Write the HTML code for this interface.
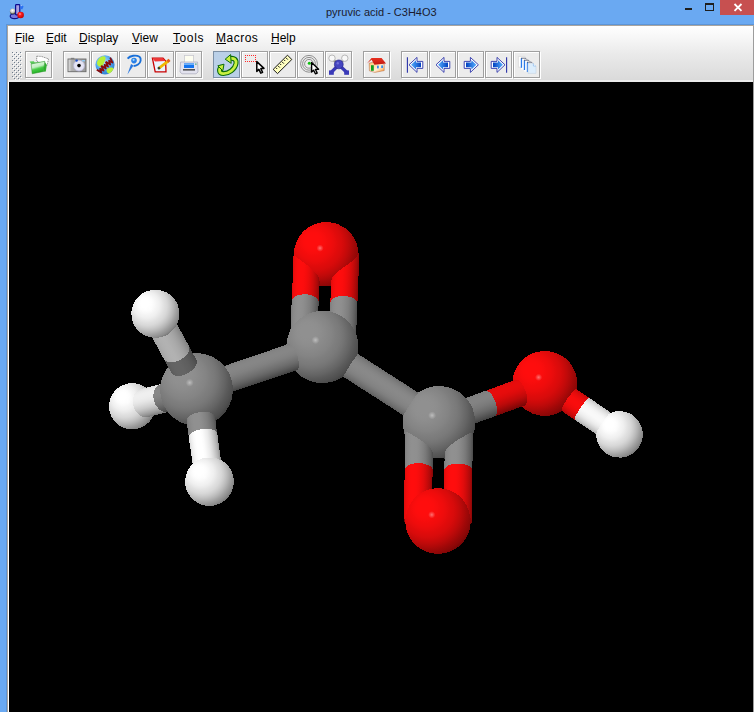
<!DOCTYPE html>
<html><head><meta charset="utf-8">
<style>
html,body{margin:0;padding:0;width:754px;height:712px;overflow:hidden;background:#6aa9f2;font-family:"Liberation Sans",sans-serif;}
.abs{position:absolute;}
#frame{position:absolute;left:0;top:0;width:754px;height:712px;background:#6aa9f2;}
#title{position:absolute;left:326px;top:6px;font-size:11px;color:#1b1b2e;white-space:nowrap;}
#client{position:absolute;left:6px;top:24px;width:748px;height:688px;background:#5c95d8;}
#inner{position:absolute;left:7px;top:25px;width:747px;height:687px;background:#aaa59f;}
#bars{position:absolute;left:8px;top:26px;width:745px;height:56px;background:linear-gradient(#ffffff 0px,#f5f5f5 14px,#eaeaea 28px,#dadada 54px,#ebebeb 54px,#ececec 56px);}
#rightline{position:absolute;left:753px;top:26px;width:1px;height:686px;background:#9c9c9c;}
#leftwhite{position:absolute;left:8px;top:82px;width:1px;height:630px;background:#ffffff;}
#view{position:absolute;left:9px;top:82px;width:744px;height:630px;background:#000;}
.menu{position:absolute;top:31px;font-size:12px;color:#000;white-space:nowrap;}
.ul{position:absolute;top:43px;height:1px;background:#000;}
.btn{position:absolute;top:51px;width:25px;height:25px;border:1px solid #a0a0a0;box-shadow:inset 1px 1px 0 #fff,1px 1px 0 #fff;background:#ececec;}
.btn.sel{background:#bad0e8;border-color:#7d90a5;box-shadow:1px 1px 0 #fff;}
.btn svg{position:absolute;left:-1px;top:-1px;}
</style></head><body>
<div id="frame"></div>
<!-- title bar -->
<svg class="abs" style="left:9px;top:3px" width="17" height="18" viewBox="0 0 17 18">
  <defs><radialGradient id="tgb" cx="0.45" cy="0.35" r="0.6"><stop offset="0" stop-color="#ffffff"/><stop offset="0.6" stop-color="#c8c8c0"/><stop offset="1" stop-color="#404040"/></radialGradient>
  <radialGradient id="trb" cx="0.4" cy="0.35" r="0.65"><stop offset="0" stop-color="#ffb0b0"/><stop offset="0.35" stop-color="#ff2020"/><stop offset="1" stop-color="#c00000"/></radialGradient></defs>
  <ellipse cx="5.5" cy="13.2" rx="4.3" ry="2.4" fill="#7a7ae0" stroke="#10108a" stroke-width="1.1"/>
  <circle cx="3.8" cy="8.4" r="2.9" fill="url(#tgb)"/>
  <rect x="6.6" y="1.6" width="4.2" height="10.2" rx="0.8" fill="#a8a0e0" stroke="#0c0c90" stroke-width="1.2"/>
  <path d="M11.2 1.2 L14.6 3.6 L13.2 6.6 L11.2 5.6 Z" fill="#2a70f0"/>
  <path d="M11.6 1.6 L12.8 2.4 L12 3.4 Z" fill="#ffffff" opacity="0.9"/>
  <circle cx="11.6" cy="12" r="3.3" fill="url(#trb)"/>
</svg>
<div id="title">pyruvic acid - C3H4O3</div>
<div class="abs" style="left:685px;top:8px;width:7px;height:2px;background:#1e1e1e"></div>
<div class="abs" style="left:705px;top:3px;width:7px;height:5px;border:1px solid #1e1e1e;border-top-width:2px"></div>
<div class="abs" style="left:720px;top:0px;width:34px;height:15px;background:#c75050"></div>
<svg class="abs" style="left:733px;top:3px" width="10" height="9" viewBox="0 0 10 9">
  <path d="M1.5 1 L8.5 7.8 M8.5 1 L1.5 7.8" stroke="#fff" stroke-width="1.8"/>
</svg>
<div id="client"></div>
<div id="inner"></div>
<div id="bars"></div>
<div id="rightline"></div>
<div id="leftwhite"></div>
<!-- menus -->
<div class="menu" style="left:15px">File</div>
<div class="menu" style="left:46px">Edit</div>
<div class="menu" style="left:79px">Display</div>
<div class="menu" style="left:132px">View</div>
<div class="menu" style="left:173px;letter-spacing:0.6px">Tools</div>
<div class="menu" style="left:216px;letter-spacing:0.5px">Macros</div>
<div class="menu" style="left:271px">Help</div>
<div class="ul" style="left:15px;width:6px"></div>
<div class="ul" style="left:46px;width:7px"></div>
<div class="ul" style="left:79px;width:8px"></div>
<div class="ul" style="left:132px;width:7px"></div>
<div class="ul" style="left:173px;width:7px"></div>
<div class="ul" style="left:216px;width:10px"></div>
<div class="ul" style="left:271px;width:8px"></div>
<!-- grip -->
<svg class="abs" style="left:11px;top:51px" width="12" height="29" viewBox="0 0 12 29" shape-rendering="crispEdges"><g fill="#ffffff"><rect x="2" y="2" width="1" height="1"/><rect x="6" y="2" width="1" height="1"/><rect x="10" y="2" width="1" height="1"/><rect x="4" y="4" width="1" height="1"/><rect x="8" y="4" width="1" height="1"/><rect x="2" y="6" width="1" height="1"/><rect x="6" y="6" width="1" height="1"/><rect x="10" y="6" width="1" height="1"/><rect x="4" y="8" width="1" height="1"/><rect x="8" y="8" width="1" height="1"/><rect x="2" y="10" width="1" height="1"/><rect x="6" y="10" width="1" height="1"/><rect x="10" y="10" width="1" height="1"/><rect x="4" y="12" width="1" height="1"/><rect x="8" y="12" width="1" height="1"/><rect x="2" y="14" width="1" height="1"/><rect x="6" y="14" width="1" height="1"/><rect x="10" y="14" width="1" height="1"/><rect x="4" y="16" width="1" height="1"/><rect x="8" y="16" width="1" height="1"/><rect x="2" y="18" width="1" height="1"/><rect x="6" y="18" width="1" height="1"/><rect x="10" y="18" width="1" height="1"/><rect x="4" y="20" width="1" height="1"/><rect x="8" y="20" width="1" height="1"/><rect x="2" y="22" width="1" height="1"/><rect x="6" y="22" width="1" height="1"/><rect x="10" y="22" width="1" height="1"/><rect x="4" y="24" width="1" height="1"/><rect x="8" y="24" width="1" height="1"/><rect x="2" y="26" width="1" height="1"/><rect x="6" y="26" width="1" height="1"/><rect x="10" y="26" width="1" height="1"/><rect x="4" y="28" width="1" height="1"/><rect x="8" y="28" width="1" height="1"/></g><g fill="#6f7c8c"><rect x="1" y="1" width="1" height="1"/><rect x="5" y="1" width="1" height="1"/><rect x="9" y="1" width="1" height="1"/><rect x="3" y="3" width="1" height="1"/><rect x="7" y="3" width="1" height="1"/><rect x="1" y="5" width="1" height="1"/><rect x="5" y="5" width="1" height="1"/><rect x="9" y="5" width="1" height="1"/><rect x="3" y="7" width="1" height="1"/><rect x="7" y="7" width="1" height="1"/><rect x="1" y="9" width="1" height="1"/><rect x="5" y="9" width="1" height="1"/><rect x="9" y="9" width="1" height="1"/><rect x="3" y="11" width="1" height="1"/><rect x="7" y="11" width="1" height="1"/><rect x="1" y="13" width="1" height="1"/><rect x="5" y="13" width="1" height="1"/><rect x="9" y="13" width="1" height="1"/><rect x="3" y="15" width="1" height="1"/><rect x="7" y="15" width="1" height="1"/><rect x="1" y="17" width="1" height="1"/><rect x="5" y="17" width="1" height="1"/><rect x="9" y="17" width="1" height="1"/><rect x="3" y="19" width="1" height="1"/><rect x="7" y="19" width="1" height="1"/><rect x="1" y="21" width="1" height="1"/><rect x="5" y="21" width="1" height="1"/><rect x="9" y="21" width="1" height="1"/><rect x="3" y="23" width="1" height="1"/><rect x="7" y="23" width="1" height="1"/><rect x="1" y="25" width="1" height="1"/><rect x="5" y="25" width="1" height="1"/><rect x="9" y="25" width="1" height="1"/><rect x="3" y="27" width="1" height="1"/><rect x="7" y="27" width="1" height="1"/></g></svg>
<!-- buttons -->
<div class="btn" style="left:25px"></div>
<div class="btn" style="left:63px"></div>
<div class="btn" style="left:91px"></div>
<div class="btn" style="left:119px"></div>
<div class="btn" style="left:147px"></div>
<div class="btn" style="left:175px"></div>
<div class="btn sel" style="left:213px"></div>
<div class="btn" style="left:241px"></div>
<div class="btn" style="left:269px"></div>
<div class="btn" style="left:297px"></div>
<div class="btn" style="left:325px"></div>
<div class="btn" style="left:363px"></div>
<div class="btn" style="left:401px"></div>
<div class="btn" style="left:429px"></div>
<div class="btn" style="left:457px"></div>
<div class="btn" style="left:485px"></div>
<div class="btn" style="left:513px"></div>
<svg class="abs" style="left:0;top:51px" width="560" height="28" viewBox="0 51 560 28">
<defs>
 <linearGradient id="ifold" x1="0.2" y1="0" x2="0.5" y2="1"><stop offset="0" stop-color="#f0fcf0"/><stop offset="0.45" stop-color="#c0eec0"/><stop offset="0.62" stop-color="#48cc48"/><stop offset="1" stop-color="#18a818"/></linearGradient>
 <linearGradient id="icam" x1="0" y1="0" x2="1" y2="0"><stop offset="0" stop-color="#e8e8e8"/><stop offset="0.2" stop-color="#b0b0b0"/><stop offset="1" stop-color="#9a9a9a"/></linearGradient>
 <radialGradient id="iglobe" cx="0.4" cy="0.35" r="0.7"><stop offset="0" stop-color="#b8e0ff"/><stop offset="0.6" stop-color="#4aa4ec"/><stop offset="1" stop-color="#2a78d0"/></radialGradient>
 <linearGradient id="iarrR" x1="0" y1="0" x2="1" y2="0"><stop offset="0" stop-color="#0040c0"/><stop offset="1" stop-color="#58b0ff"/></linearGradient>
 <linearGradient id="iarrL" x1="1" y1="0" x2="0" y2="0"><stop offset="0" stop-color="#0040c0"/><stop offset="1" stop-color="#58b0ff"/></linearGradient>
 <linearGradient id="iroof" x1="0" y1="0" x2="0" y2="1"><stop offset="0" stop-color="#e83020"/><stop offset="1" stop-color="#c01810"/></linearGradient>
 <linearGradient id="iwall" x1="0" y1="0" x2="1" y2="1"><stop offset="0" stop-color="#ffc070"/><stop offset="0.6" stop-color="#fff0d8"/><stop offset="1" stop-color="#ff9020"/></linearGradient>
</defs>
<!-- folder @25 -->
<g transform="translate(25,51)">
 <path d="M11.8 5.2 L16.5 5.4 L23.6 7.9 L22 14.5 L11.6 10 Z" fill="#ffffff" stroke="#606060" stroke-width="0.7" stroke-dasharray="1.1 0.7"/>
 <path d="M19.6 10.6 L21.8 14 L20.8 20.6 L18.6 20.8 Z" fill="#30b030"/>
 <path d="M4.6 10.4 L8.8 10.2 L9.8 11.6 L19.6 10.4 L19.2 12 L6.4 13.2 Z" fill="#58c858"/>
 <path d="M6.2 13 L19.8 10.3 L18.6 20.4 L7.2 22.8 Z" fill="url(#ifold)" stroke="#289028" stroke-width="0.5"/>
</g>
<!-- camera @63 -->
<g transform="translate(63,51)">
 <rect x="7.8" y="6.8" width="3.5" height="1.5" fill="#909090"/>
 <rect x="5" y="8" width="18" height="12.7" fill="url(#icam)" stroke="#6a6a6a" stroke-width="0.9"/>
 <circle cx="16" cy="14.6" r="5.4" fill="#e4e4f4" stroke="#b8b8d8" stroke-width="0.8"/>
 <circle cx="16" cy="14.6" r="1.8" fill="#000"/>
 <circle cx="13.6" cy="9.6" r="1.2" fill="#2050c8"/>
 <rect x="19" y="9" width="3" height="1.4" fill="#90c8f0"/>
</g>
<!-- www @91 -->
<g transform="translate(91,51)">
 <circle cx="14" cy="13.8" r="9.6" fill="url(#iglobe)"/>
 <path d="M7 9 C9 5, 13 4.5, 14.5 6 C15 9, 13 11, 12 14 C11 17, 8 16, 6.5 14 C5.5 12, 6 10.5, 7 9 Z" fill="#b8f038"/>
 <path d="M16 18 C18 16, 22 16, 22.6 17.5 C21.5 20.5, 19 22.5, 17 22.6 C15.5 21, 15 19, 16 18 Z" fill="#b8f038"/>
 <path transform="translate(14.2,14.6) rotate(-42)" d="M-9.0 -2.6 L-7.5 2.6 L-6.0 -1 L-4.5 2.6 L-3.0 -2.6 M-3.0 -2.6 L-1.5 2.6 L0.0 -1 L1.5 2.6 L3.0 -2.6 M3.0 -2.6 L4.5 2.6 L6.0 -1 L7.5 2.6 L9.0 -2.6" fill="none" stroke="#8a0c0c" stroke-width="1.7" stroke-linejoin="round"/>
</g>
<!-- pin @119 -->
<g transform="translate(119,51)">
 <path d="M8.6 7.6 C11 4.6, 17 3.6, 20.5 5.8 C22.5 7.5, 22 11.5, 19 13.5 C17.5 14.5, 16 15, 14.6 15" fill="none" stroke="#1a70d8" stroke-width="1.9"/>
 <path d="M12 13 L14.5 14.5 L8.4 23.6 Z" fill="#2a78e0"/>
 <circle cx="15" cy="9.6" r="2.8" fill="#2a80e8"/>
 <circle cx="14.6" cy="8.8" r="1.1" fill="#9ad8ff"/>
</g>
<!-- edit @147 -->
<g transform="translate(147,51)">
 <path d="M5.4 7.2 L16 7.2 L18.6 10 L19 20.8 L8.2 20.8 Z" fill="#e8f4ff" stroke="#c80000" stroke-width="1.3"/>
 <path d="M5.4 7.2 L16 7.2 L18.4 10 L8 10.6 Z" fill="#f03838"/>
 <path d="M11.5 17.5 L21.8 9.6" stroke="#f0b800" stroke-width="2.8"/>
 <path d="M20.4 10.6 L22.6 8.8" stroke="#e06020" stroke-width="2.8"/>
 <path d="M11 17.9 L12.8 16.5" stroke="#304030" stroke-width="2.4"/>
</g>
<!-- print @175 -->
<g transform="translate(175,51)">
 <rect x="9.4" y="4.4" width="9.2" height="8.6" fill="#fdfdf0" stroke="#c8c8d0" stroke-width="0.8"/>
 <path d="M5.6 11 L22.6 11 L23 21 L21 22.8 L7 22.8 L5 21 Z" fill="#e2e2ee" stroke="#b0b0c0" stroke-width="0.8"/>
 <rect x="9" y="12.2" width="10" height="4.8" fill="#1474f0"/>
 <rect x="9" y="12.2" width="10" height="1.8" fill="#70b0f8"/>
 <rect x="8" y="18.2" width="12" height="1.3" fill="#303030"/>
 <rect x="20" y="12.6" width="1.6" height="1" fill="#30a060"/>
</g>
<!-- rotate @213 -->
<g transform="translate(213,51)">
 <path d="M9.2 15.6 C5.5 17.5, 5.4 22.6, 10.5 22.6 C15.5 22.6, 22 18.4, 23 12.6 C23.6 8.6, 21 6.8, 17.4 7.4" fill="none" stroke="#0a6a0a" stroke-width="5"/>
 <path d="M9.2 15.6 C5.5 17.5, 5.4 22.6, 10.5 22.6 C15.5 22.6, 22 18.4, 23 12.6 C23.6 8.6, 21 6.8, 17.4 7.4" fill="none" stroke="#c8f040" stroke-width="2.8"/>
 <path d="M12.2 8.2 L17.6 3.6 L18.2 12.4 Z" fill="#c8f040" stroke="#0a6a0a" stroke-width="1"/>
 <path d="M4.8 14.8 L11 13.2 L9.8 19.8 Z" fill="#c8f040" stroke="#0a6a0a" stroke-width="1"/>
</g>
<!-- select @241 -->
<g transform="translate(241,51)">
 <g fill="#ff2a2a" shape-rendering="crispEdges"><rect x="4" y="4" width="1" height="1"/><rect x="4" y="10" width="1" height="1"/><rect x="6" y="4" width="1" height="1"/><rect x="6" y="10" width="1" height="1"/><rect x="8" y="4" width="1" height="1"/><rect x="8" y="10" width="1" height="1"/><rect x="10" y="4" width="1" height="1"/><rect x="10" y="10" width="1" height="1"/><rect x="12" y="4" width="1" height="1"/><rect x="12" y="10" width="1" height="1"/><rect x="14" y="4" width="1" height="1"/><rect x="14" y="10" width="1" height="1"/><rect x="4" y="6" width="1" height="1"/><rect x="14" y="6" width="1" height="1"/><rect x="4" y="8" width="1" height="1"/><rect x="14" y="8" width="1" height="1"/></g>
 <path d="M15.8 10.6 L15.8 20.4 L17.9 18.4 L19.8 22.2 L21.6 21.3 L19.8 17.6 L23 17.4 Z" fill="#fff" stroke="#000" stroke-width="1.5" stroke-linejoin="round"/>
</g>
<!-- ruler @269 -->
<g transform="translate(269,51)">
 <path d="M4.2 18.4 L18.5 4.2 L22.8 8.5 L8.5 22.6 Z" fill="#ffffc0" stroke="#000" stroke-width="0.9"/>
 <path d="M7 16.8 L8.2 18 M9 14.8 L10.8 16.6 M11 12.8 L12.2 14 M13 10.8 L14.8 12.6 M15 8.8 L16.2 10 M17 6.8 L18.8 8.6" stroke="#000" stroke-width="0.9"/>
</g>
<!-- rotpick @297 -->
<g transform="translate(297,51)">
 <circle cx="12" cy="12.8" r="8.4" fill="none" stroke="#858585" stroke-width="0.9"/>
 <circle cx="12" cy="12.8" r="6.4" fill="none" stroke="#858585" stroke-width="0.9"/>
 <circle cx="12" cy="12.8" r="4.4" fill="none" stroke="#858585" stroke-width="0.9"/>
 <circle cx="12.3" cy="12.2" r="1.5" fill="#10c010"/>
 <path d="M14.6 11.4 L14.6 21 L16.6 19.2 L18.4 22.8 L20.2 22 L18.4 18.4 L21.6 18.2 Z" fill="#fff" stroke="#000" stroke-width="1.4" stroke-linejoin="round"/>
</g>
<!-- atom @325 -->
<g transform="translate(325,51)">
 <path d="M8.6 9 L13 13 M18.6 9 L14.6 13" stroke="#8a8a8a" stroke-width="2.4"/>
 <circle cx="7" cy="7.2" r="3.2" fill="#f8f8f8" stroke="#a8a8a8" stroke-width="0.8"/>
 <circle cx="19.8" cy="7.2" r="3.2" fill="#f8f8f8" stroke="#a8a8a8" stroke-width="0.8"/>
 <path d="M6.6 21 L13.8 13.8 L21.4 21" fill="none" stroke="#3a3ab4" stroke-width="3.2"/>
 <rect x="4" y="19.4" width="4.8" height="4.4" fill="#3a3ab8"/>
 <rect x="19.2" y="19.4" width="4.8" height="4.4" fill="#3a3ab8"/>
 <circle cx="13.8" cy="13.4" r="4.4" fill="#4646c0" stroke="#28288c" stroke-width="0.7"/>
 <circle cx="12.8" cy="12.2" r="1.2" fill="#7070d8"/>
</g>
<!-- home @363 -->
<g transform="translate(363,51)">
 <path d="M6.2 12.2 L10.2 11.2 L21.2 13 L21.2 19.6 L11.8 21.4 L6.4 19.8 Z" fill="url(#iwall)" stroke="#a04010" stroke-width="0.4"/>
 <path d="M4 12.4 L8.5 7 L18.6 7 L23 12.6 L11.4 13.8 L8.6 8.8 Z" fill="url(#iroof)"/>
 <rect x="8" y="14.2" width="2.8" height="5.6" fill="#10a020"/>
 <rect x="14" y="14.6" width="1.8" height="2.8" fill="#3a8ee8"/>
 <rect x="18.2" y="14.4" width="1.8" height="2.6" fill="#3a8ee8"/>
</g>
<!-- first @401 -->
<g transform="translate(401,51)">
 <path d="M6.4 6.2 V21.8" stroke="#2a32a8" stroke-width="1.1"/>
 <path d="M8 13.8 L16 6.4 L16 10.4 L21.8 10.4 L21.8 17.4 L16 17.4 L16 21.4 Z" fill="#fff" stroke="#2a32a8" stroke-width="0.9" stroke-linejoin="round"/>
 <path d="M10 13.8 L15 9.2 L15 11.6 L20 11.6 L20 16.2 L15 16.2 L15 18.6 Z" fill="url(#iarrL)"/>
</g>
<!-- prev @429 -->
<g transform="translate(429,51)">
 <path d="M7 13.8 L15 6.4 L15 10.4 L20.8 10.4 L20.8 17.4 L15 17.4 L15 21.4 Z" fill="#fff" stroke="#2a32a8" stroke-width="0.9" stroke-linejoin="round"/>
 <path d="M9 13.8 L14 9.2 L14 11.6 L19 11.6 L19 16.2 L14 16.2 L14 18.6 Z" fill="url(#iarrL)"/>
</g>
<!-- next @457 -->
<g transform="translate(457,51)">
 <path d="M21.4 13.8 L13.4 6.4 L13.4 10.4 L7.2 10.4 L7.2 17.4 L13.4 17.4 L13.4 21.4 Z" fill="#fff" stroke="#2a32a8" stroke-width="0.9" stroke-linejoin="round"/>
 <path d="M19.4 13.8 L14.4 9.2 L14.4 11.6 L9 11.6 L9 16.2 L14.4 16.2 L14.4 18.6 Z" fill="url(#iarrR)"/>
</g>
<!-- last @485 -->
<g transform="translate(485,51)">
 <path d="M21.6 6.2 V21.8" stroke="#2a32a8" stroke-width="1.1"/>
 <path d="M20 13.8 L12 6.4 L12 10.4 L6.2 10.4 L6.2 17.4 L12 17.4 L12 21.4 Z" fill="#fff" stroke="#2a32a8" stroke-width="0.9" stroke-linejoin="round"/>
 <path d="M18 13.8 L13 9.2 L13 11.6 L8 11.6 L8 16.2 L13 16.2 L13 18.6 Z" fill="url(#iarrR)"/>
</g>
<!-- copies @513 -->
<g transform="translate(513,51)">
 <path d="M5.4 5.4 H11.6 L12.6 6.4 V16.2 H5.4 Z" fill="#fff" stroke="#d0d0d0" stroke-width="0.6"/>
 <path d="M8.2 7.4 H12.4 L13.8 8.6 V18.4 H8.2 Z" fill="#fff"/>
 <rect x="7.8" y="7.2" width="1.3" height="9.6" fill="#2a7ae8"/>
 <path d="M8 7.2 H12.4 L13.6 8.4" fill="none" stroke="#303850" stroke-width="0.7"/>
 <path d="M11.2 9.4 H15.4 L16.8 10.6 V20.4 H11.2 Z" fill="#fff"/>
 <rect x="10.8" y="9.2" width="1.3" height="9.8" fill="#2a7ae8"/>
 <path d="M11 9.2 H15.4 L16.6 10.4" fill="none" stroke="#303850" stroke-width="0.7"/>
 <path d="M14.2 11.4 H18.4 L19.8 12.6 V21 H14.2 Z" fill="#fff"/>
 <rect x="13.8" y="11.2" width="1.3" height="9.8" fill="#2a7ae8"/>
 <path d="M14 11.2 H18.4 L19.6 12.4" fill="none" stroke="#303850" stroke-width="0.7"/>
 <path d="M15 12.4 H20.4 L23 15 V22.4 H15 Z" fill="#dcedfc" stroke="#c8d4e0" stroke-width="0.6"/>
 <path d="M20.4 12.4 V15 H23" fill="#ffffff" stroke="#7ab0e8" stroke-width="0.6"/>
</g>
</svg>

<div id="view"></div>
<svg style="position:absolute;left:9px;top:82px" width="744" height="630" viewBox="9 82 744 630" shape-rendering="crispEdges"><defs><radialGradient id="spec"><stop offset="0" stop-color="#fff" stop-opacity="0.42"/><stop offset="0.5" stop-color="#fff" stop-opacity="0.2"/><stop offset="1" stop-color="#fff" stop-opacity="0"/></radialGradient><radialGradient id="g0" gradientUnits="userSpaceOnUse" cx="326.2" cy="254.3" r="90.44" fx="311.34" fy="239.44"><stop offset="0" stop-color="#ff0d0d"/><stop offset="0.03" stop-color="#ff0d0d"/><stop offset="0.06" stop-color="#ff0d0d"/><stop offset="0.1" stop-color="#fd0d0d"/><stop offset="0.13" stop-color="#f90d0d"/><stop offset="0.16" stop-color="#f40c0c"/><stop offset="0.19" stop-color="#f00c0c"/><stop offset="0.22" stop-color="#e90c0c"/><stop offset="0.25" stop-color="#e10b0b"/><stop offset="0.29" stop-color="#d80b0b"/><stop offset="0.32" stop-color="#cd0a0a"/><stop offset="0.35" stop-color="#c00a0a"/><stop offset="0.38" stop-color="#b10909"/><stop offset="0.41" stop-color="#a00808"/><stop offset="0.45" stop-color="#8c0707"/><stop offset="0.48" stop-color="#740606"/></radialGradient><radialGradient id="g8" gradientUnits="userSpaceOnUse" cx="544.8" cy="383.5" r="91" fx="529.85" fy="368.55"><stop offset="0" stop-color="#ff0d0d"/><stop offset="0.03" stop-color="#ff0d0d"/><stop offset="0.06" stop-color="#ff0d0d"/><stop offset="0.1" stop-color="#fd0d0d"/><stop offset="0.13" stop-color="#f90d0d"/><stop offset="0.16" stop-color="#f40c0c"/><stop offset="0.19" stop-color="#f00c0c"/><stop offset="0.22" stop-color="#e90c0c"/><stop offset="0.25" stop-color="#e10b0b"/><stop offset="0.29" stop-color="#d80b0b"/><stop offset="0.32" stop-color="#cd0a0a"/><stop offset="0.35" stop-color="#c00a0a"/><stop offset="0.38" stop-color="#b10909"/><stop offset="0.41" stop-color="#a00808"/><stop offset="0.45" stop-color="#8c0707"/><stop offset="0.48" stop-color="#740606"/></radialGradient><linearGradient id="g38" gradientUnits="userSpaceOnUse" x1="552.23" y1="372.59" x2="537.37" y2="394.41"><stop offset="0" stop-color="#c00a0a"/><stop offset="0.08" stop-color="#d80b0b"/><stop offset="0.17" stop-color="#e70c0c"/><stop offset="0.25" stop-color="#f10c0c"/><stop offset="0.33" stop-color="#f70d0d"/><stop offset="0.42" stop-color="#f90d0d"/><stop offset="0.5" stop-color="#f90d0d"/><stop offset="0.58" stop-color="#f50d0d"/><stop offset="0.67" stop-color="#ef0c0c"/><stop offset="0.75" stop-color="#e60c0c"/><stop offset="0.83" stop-color="#d80b0b"/><stop offset="0.92" stop-color="#c60a0a"/><stop offset="1" stop-color="#a90909"/></linearGradient><linearGradient id="g20" gradientUnits="userSpaceOnUse" x1="291.65" y1="301.17" x2="318.83" y2="302.28"><stop offset="0" stop-color="#e00b0b"/><stop offset="0.08" stop-color="#f20c0c"/><stop offset="0.17" stop-color="#fb0d0d"/><stop offset="0.25" stop-color="#fe0d0d"/><stop offset="0.33" stop-color="#fe0d0d"/><stop offset="0.42" stop-color="#fb0d0d"/><stop offset="0.5" stop-color="#f50c0c"/><stop offset="0.58" stop-color="#ec0c0c"/><stop offset="0.67" stop-color="#e00b0b"/><stop offset="0.75" stop-color="#d10b0b"/><stop offset="0.83" stop-color="#bf0a0a"/><stop offset="0.92" stop-color="#a70909"/><stop offset="1" stop-color="#860707"/></linearGradient><linearGradient id="g24" gradientUnits="userSpaceOnUse" x1="330.22" y1="302.75" x2="357.4" y2="303.86"><stop offset="0" stop-color="#e00b0b"/><stop offset="0.08" stop-color="#f20c0c"/><stop offset="0.17" stop-color="#fb0d0d"/><stop offset="0.25" stop-color="#fe0d0d"/><stop offset="0.33" stop-color="#fe0d0d"/><stop offset="0.42" stop-color="#fb0d0d"/><stop offset="0.5" stop-color="#f50c0c"/><stop offset="0.58" stop-color="#ec0c0c"/><stop offset="0.67" stop-color="#e00b0b"/><stop offset="0.75" stop-color="#d10b0b"/><stop offset="0.83" stop-color="#bf0a0a"/><stop offset="0.92" stop-color="#a70909"/><stop offset="1" stop-color="#860707"/></linearGradient><linearGradient id="g40" gradientUnits="userSpaceOnUse" x1="589.58" y1="398.04" x2="574.72" y2="419.86"><stop offset="0" stop-color="#c0c0c0"/><stop offset="0.08" stop-color="#d8d8d8"/><stop offset="0.17" stop-color="#e7e7e7"/><stop offset="0.25" stop-color="#f1f1f1"/><stop offset="0.33" stop-color="#f7f7f7"/><stop offset="0.42" stop-color="#f9f9f9"/><stop offset="0.5" stop-color="#f9f9f9"/><stop offset="0.58" stop-color="#f5f5f5"/><stop offset="0.67" stop-color="#efefef"/><stop offset="0.75" stop-color="#e6e6e6"/><stop offset="0.83" stop-color="#d8d8d8"/><stop offset="0.92" stop-color="#c6c6c6"/><stop offset="1" stop-color="#a9a9a9"/></linearGradient><linearGradient id="g36" gradientUnits="userSpaceOnUse" x1="485.07" y1="390.81" x2="494.5" y2="416.54"><stop offset="0" stop-color="#db0b0b"/><stop offset="0.08" stop-color="#e50c0c"/><stop offset="0.17" stop-color="#e80c0c"/><stop offset="0.25" stop-color="#e70c0c"/><stop offset="0.33" stop-color="#e40c0c"/><stop offset="0.42" stop-color="#de0b0b"/><stop offset="0.5" stop-color="#d50b0b"/><stop offset="0.58" stop-color="#cb0a0a"/><stop offset="0.67" stop-color="#bf0a0a"/><stop offset="0.75" stop-color="#b00909"/><stop offset="0.83" stop-color="#9e0808"/><stop offset="0.92" stop-color="#890707"/><stop offset="1" stop-color="#730606"/></linearGradient><radialGradient id="g9" gradientUnits="userSpaceOnUse" cx="619.5" cy="434.4" r="65.24" fx="608.78" fy="423.68"><stop offset="0" stop-color="#ffffff"/><stop offset="0.03" stop-color="#ffffff"/><stop offset="0.06" stop-color="#ffffff"/><stop offset="0.1" stop-color="#fdfdfd"/><stop offset="0.13" stop-color="#f9f9f9"/><stop offset="0.16" stop-color="#f4f4f4"/><stop offset="0.19" stop-color="#f0f0f0"/><stop offset="0.22" stop-color="#e9e9e9"/><stop offset="0.25" stop-color="#e1e1e1"/><stop offset="0.29" stop-color="#d8d8d8"/><stop offset="0.32" stop-color="#cdcdcd"/><stop offset="0.35" stop-color="#c0c0c0"/><stop offset="0.38" stop-color="#b1b1b1"/><stop offset="0.41" stop-color="#a0a0a0"/><stop offset="0.45" stop-color="#8c8c8c"/><stop offset="0.48" stop-color="#747474"/></radialGradient><radialGradient id="g4" gradientUnits="userSpaceOnUse" cx="132.2" cy="406.3" r="65.1" fx="121.5" fy="395.61"><stop offset="0" stop-color="#ffffff"/><stop offset="0.03" stop-color="#ffffff"/><stop offset="0.06" stop-color="#ffffff"/><stop offset="0.1" stop-color="#fdfdfd"/><stop offset="0.13" stop-color="#f9f9f9"/><stop offset="0.16" stop-color="#f4f4f4"/><stop offset="0.19" stop-color="#f0f0f0"/><stop offset="0.22" stop-color="#e9e9e9"/><stop offset="0.25" stop-color="#e1e1e1"/><stop offset="0.29" stop-color="#d8d8d8"/><stop offset="0.32" stop-color="#cdcdcd"/><stop offset="0.35" stop-color="#c0c0c0"/><stop offset="0.38" stop-color="#b1b1b1"/><stop offset="0.41" stop-color="#a0a0a0"/><stop offset="0.45" stop-color="#8c8c8c"/><stop offset="0.48" stop-color="#747474"/></radialGradient><linearGradient id="g18" gradientUnits="userSpaceOnUse" x1="289.83" y1="345.66" x2="317" y2="346.78"><stop offset="0" stop-color="#7e7e7e"/><stop offset="0.08" stop-color="#898989"/><stop offset="0.17" stop-color="#8e8e8e"/><stop offset="0.25" stop-color="#909090"/><stop offset="0.33" stop-color="#909090"/><stop offset="0.42" stop-color="#8e8e8e"/><stop offset="0.5" stop-color="#8a8a8a"/><stop offset="0.58" stop-color="#858585"/><stop offset="0.67" stop-color="#7f7f7f"/><stop offset="0.75" stop-color="#767676"/><stop offset="0.83" stop-color="#6c6c6c"/><stop offset="0.92" stop-color="#5e5e5e"/><stop offset="1" stop-color="#4c4c4c"/></linearGradient><linearGradient id="g22" gradientUnits="userSpaceOnUse" x1="328.39" y1="347.25" x2="355.57" y2="348.36"><stop offset="0" stop-color="#7e7e7e"/><stop offset="0.08" stop-color="#898989"/><stop offset="0.17" stop-color="#8e8e8e"/><stop offset="0.25" stop-color="#909090"/><stop offset="0.33" stop-color="#909090"/><stop offset="0.42" stop-color="#8e8e8e"/><stop offset="0.5" stop-color="#8a8a8a"/><stop offset="0.58" stop-color="#858585"/><stop offset="0.67" stop-color="#7f7f7f"/><stop offset="0.75" stop-color="#767676"/><stop offset="0.83" stop-color="#6c6c6c"/><stop offset="0.92" stop-color="#5e5e5e"/><stop offset="1" stop-color="#4c4c4c"/></linearGradient><linearGradient id="g34" gradientUnits="userSpaceOnUse" x1="434.28" y1="409.44" x2="443.72" y2="435.16"><stop offset="0" stop-color="#7c7c7c"/><stop offset="0.08" stop-color="#818181"/><stop offset="0.17" stop-color="#838383"/><stop offset="0.25" stop-color="#838383"/><stop offset="0.33" stop-color="#818181"/><stop offset="0.42" stop-color="#7d7d7d"/><stop offset="0.5" stop-color="#797979"/><stop offset="0.58" stop-color="#737373"/><stop offset="0.67" stop-color="#6c6c6c"/><stop offset="0.75" stop-color="#636363"/><stop offset="0.83" stop-color="#595959"/><stop offset="0.92" stop-color="#4d4d4d"/><stop offset="1" stop-color="#414141"/></linearGradient><linearGradient id="g48" gradientUnits="userSpaceOnUse" x1="168.04" y1="411.99" x2="160.76" y2="383.91"><stop offset="0" stop-color="#747474"/><stop offset="0.08" stop-color="#929292"/><stop offset="0.17" stop-color="#a9a9a9"/><stop offset="0.25" stop-color="#bbbbbb"/><stop offset="0.33" stop-color="#cacaca"/><stop offset="0.42" stop-color="#d6d6d6"/><stop offset="0.5" stop-color="#e0e0e0"/><stop offset="0.58" stop-color="#e8e8e8"/><stop offset="0.67" stop-color="#ededed"/><stop offset="0.75" stop-color="#efefef"/><stop offset="0.83" stop-color="#efefef"/><stop offset="0.92" stop-color="#eaeaea"/><stop offset="1" stop-color="#dddddd"/></linearGradient><radialGradient id="g1" gradientUnits="userSpaceOnUse" cx="322.4" cy="347" r="101.36" fx="305.75" fy="330.35"><stop offset="0" stop-color="#909090"/><stop offset="0.03" stop-color="#909090"/><stop offset="0.06" stop-color="#909090"/><stop offset="0.1" stop-color="#8f8f8f"/><stop offset="0.13" stop-color="#8d8d8d"/><stop offset="0.16" stop-color="#8a8a8a"/><stop offset="0.19" stop-color="#878787"/><stop offset="0.22" stop-color="#848484"/><stop offset="0.25" stop-color="#7f7f7f"/><stop offset="0.29" stop-color="#7a7a7a"/><stop offset="0.32" stop-color="#747474"/><stop offset="0.35" stop-color="#6c6c6c"/><stop offset="0.38" stop-color="#646464"/><stop offset="0.41" stop-color="#5a5a5a"/><stop offset="0.45" stop-color="#4f4f4f"/><stop offset="0.48" stop-color="#414141"/></radialGradient><linearGradient id="g14" gradientUnits="userSpaceOnUse" x1="329.83" y1="335.49" x2="314.97" y2="358.51"><stop offset="0" stop-color="#6b6b6b"/><stop offset="0.08" stop-color="#787878"/><stop offset="0.17" stop-color="#808080"/><stop offset="0.25" stop-color="#858585"/><stop offset="0.33" stop-color="#888888"/><stop offset="0.42" stop-color="#898989"/><stop offset="0.5" stop-color="#888888"/><stop offset="0.58" stop-color="#868686"/><stop offset="0.67" stop-color="#838383"/><stop offset="0.75" stop-color="#7e7e7e"/><stop offset="0.83" stop-color="#767676"/><stop offset="0.92" stop-color="#6c6c6c"/><stop offset="1" stop-color="#5d5d5d"/></linearGradient><linearGradient id="g16" gradientUnits="userSpaceOnUse" x1="388.13" y1="373.14" x2="373.27" y2="396.16"><stop offset="0" stop-color="#6b6b6b"/><stop offset="0.08" stop-color="#787878"/><stop offset="0.17" stop-color="#808080"/><stop offset="0.25" stop-color="#858585"/><stop offset="0.33" stop-color="#888888"/><stop offset="0.42" stop-color="#898989"/><stop offset="0.5" stop-color="#888888"/><stop offset="0.58" stop-color="#868686"/><stop offset="0.67" stop-color="#838383"/><stop offset="0.75" stop-color="#7e7e7e"/><stop offset="0.83" stop-color="#767676"/><stop offset="0.92" stop-color="#6c6c6c"/><stop offset="1" stop-color="#5d5d5d"/></linearGradient><radialGradient id="g6" gradientUnits="userSpaceOnUse" cx="439" cy="422.3" r="101.64" fx="422.3" fy="405.6"><stop offset="0" stop-color="#909090"/><stop offset="0.03" stop-color="#909090"/><stop offset="0.06" stop-color="#909090"/><stop offset="0.1" stop-color="#8f8f8f"/><stop offset="0.13" stop-color="#8d8d8d"/><stop offset="0.16" stop-color="#8a8a8a"/><stop offset="0.19" stop-color="#878787"/><stop offset="0.22" stop-color="#848484"/><stop offset="0.25" stop-color="#7f7f7f"/><stop offset="0.29" stop-color="#7a7a7a"/><stop offset="0.32" stop-color="#747474"/><stop offset="0.35" stop-color="#6c6c6c"/><stop offset="0.38" stop-color="#646464"/><stop offset="0.41" stop-color="#5a5a5a"/><stop offset="0.45" stop-color="#4f4f4f"/><stop offset="0.48" stop-color="#414141"/></radialGradient><linearGradient id="g12" gradientUnits="userSpaceOnUse" x1="255.11" y1="355.32" x2="263.89" y2="381.28"><stop offset="0" stop-color="#7d7d7d"/><stop offset="0.08" stop-color="#848484"/><stop offset="0.17" stop-color="#868686"/><stop offset="0.25" stop-color="#868686"/><stop offset="0.33" stop-color="#848484"/><stop offset="0.42" stop-color="#818181"/><stop offset="0.5" stop-color="#7c7c7c"/><stop offset="0.58" stop-color="#767676"/><stop offset="0.67" stop-color="#6f6f6f"/><stop offset="0.75" stop-color="#676767"/><stop offset="0.83" stop-color="#5d5d5d"/><stop offset="0.92" stop-color="#505050"/><stop offset="1" stop-color="#414141"/></linearGradient><linearGradient id="g26" gradientUnits="userSpaceOnUse" x1="473" y1="422.64" x2="444.8" y2="422.36"><stop offset="0" stop-color="#4d4d4d"/><stop offset="0.08" stop-color="#606060"/><stop offset="0.17" stop-color="#6d6d6d"/><stop offset="0.25" stop-color="#787878"/><stop offset="0.33" stop-color="#808080"/><stop offset="0.42" stop-color="#878787"/><stop offset="0.5" stop-color="#8c8c8c"/><stop offset="0.58" stop-color="#8f8f8f"/><stop offset="0.67" stop-color="#909090"/><stop offset="0.75" stop-color="#909090"/><stop offset="0.83" stop-color="#8e8e8e"/><stop offset="0.92" stop-color="#898989"/><stop offset="1" stop-color="#7e7e7e"/></linearGradient><linearGradient id="g30" gradientUnits="userSpaceOnUse" x1="433.2" y1="422.24" x2="405" y2="421.96"><stop offset="0" stop-color="#4d4d4d"/><stop offset="0.08" stop-color="#606060"/><stop offset="0.17" stop-color="#6d6d6d"/><stop offset="0.25" stop-color="#787878"/><stop offset="0.33" stop-color="#808080"/><stop offset="0.42" stop-color="#878787"/><stop offset="0.5" stop-color="#8c8c8c"/><stop offset="0.58" stop-color="#8f8f8f"/><stop offset="0.67" stop-color="#909090"/><stop offset="0.75" stop-color="#909090"/><stop offset="0.83" stop-color="#8e8e8e"/><stop offset="0.92" stop-color="#898989"/><stop offset="1" stop-color="#7e7e7e"/></linearGradient><linearGradient id="g46" gradientUnits="userSpaceOnUse" x1="200.24" y1="403.64" x2="192.96" y2="375.56"><stop offset="0" stop-color="#424242"/><stop offset="0.08" stop-color="#535353"/><stop offset="0.17" stop-color="#5f5f5f"/><stop offset="0.25" stop-color="#696969"/><stop offset="0.33" stop-color="#727272"/><stop offset="0.42" stop-color="#797979"/><stop offset="0.5" stop-color="#7e7e7e"/><stop offset="0.58" stop-color="#838383"/><stop offset="0.67" stop-color="#868686"/><stop offset="0.75" stop-color="#878787"/><stop offset="0.83" stop-color="#878787"/><stop offset="0.92" stop-color="#848484"/><stop offset="1" stop-color="#7d7d7d"/></linearGradient><linearGradient id="g10" gradientUnits="userSpaceOnUse" x1="192.21" y1="376.62" x2="200.99" y2="402.58"><stop offset="0" stop-color="#7d7d7d"/><stop offset="0.08" stop-color="#848484"/><stop offset="0.17" stop-color="#868686"/><stop offset="0.25" stop-color="#868686"/><stop offset="0.33" stop-color="#848484"/><stop offset="0.42" stop-color="#818181"/><stop offset="0.5" stop-color="#7c7c7c"/><stop offset="0.58" stop-color="#767676"/><stop offset="0.67" stop-color="#6f6f6f"/><stop offset="0.75" stop-color="#676767"/><stop offset="0.83" stop-color="#5d5d5d"/><stop offset="0.92" stop-color="#505050"/><stop offset="1" stop-color="#414141"/></linearGradient><linearGradient id="g28" gradientUnits="userSpaceOnUse" x1="472.51" y1="470.51" x2="444.31" y2="470.23"><stop offset="0" stop-color="#890707"/><stop offset="0.08" stop-color="#aa0909"/><stop offset="0.17" stop-color="#c20a0a"/><stop offset="0.25" stop-color="#d40b0b"/><stop offset="0.33" stop-color="#e30c0c"/><stop offset="0.42" stop-color="#ef0c0c"/><stop offset="0.5" stop-color="#f70d0d"/><stop offset="0.58" stop-color="#fd0d0d"/><stop offset="0.67" stop-color="#ff0d0d"/><stop offset="0.75" stop-color="#ff0d0d"/><stop offset="0.83" stop-color="#fc0d0d"/><stop offset="0.92" stop-color="#f20c0c"/><stop offset="1" stop-color="#e00b0b"/></linearGradient><linearGradient id="g32" gradientUnits="userSpaceOnUse" x1="432.72" y1="470.11" x2="404.52" y2="469.83"><stop offset="0" stop-color="#890707"/><stop offset="0.08" stop-color="#aa0909"/><stop offset="0.17" stop-color="#c20a0a"/><stop offset="0.25" stop-color="#d40b0b"/><stop offset="0.33" stop-color="#e30c0c"/><stop offset="0.42" stop-color="#ef0c0c"/><stop offset="0.5" stop-color="#f70d0d"/><stop offset="0.58" stop-color="#fd0d0d"/><stop offset="0.67" stop-color="#ff0d0d"/><stop offset="0.75" stop-color="#ff0d0d"/><stop offset="0.83" stop-color="#fc0d0d"/><stop offset="0.92" stop-color="#f20c0c"/><stop offset="1" stop-color="#e00b0b"/></linearGradient><radialGradient id="g2" gradientUnits="userSpaceOnUse" cx="196.6" cy="389.6" r="101.92" fx="179.86" fy="372.86"><stop offset="0" stop-color="#909090"/><stop offset="0.03" stop-color="#909090"/><stop offset="0.06" stop-color="#909090"/><stop offset="0.1" stop-color="#8f8f8f"/><stop offset="0.13" stop-color="#8d8d8d"/><stop offset="0.16" stop-color="#8a8a8a"/><stop offset="0.19" stop-color="#878787"/><stop offset="0.22" stop-color="#848484"/><stop offset="0.25" stop-color="#7f7f7f"/><stop offset="0.29" stop-color="#7a7a7a"/><stop offset="0.32" stop-color="#747474"/><stop offset="0.35" stop-color="#6c6c6c"/><stop offset="0.38" stop-color="#646464"/><stop offset="0.41" stop-color="#5a5a5a"/><stop offset="0.45" stop-color="#4f4f4f"/><stop offset="0.48" stop-color="#414141"/></radialGradient><radialGradient id="g7" gradientUnits="userSpaceOnUse" cx="438" cy="521" r="91.84" fx="422.91" fy="505.91"><stop offset="0" stop-color="#ff0d0d"/><stop offset="0.03" stop-color="#ff0d0d"/><stop offset="0.06" stop-color="#ff0d0d"/><stop offset="0.1" stop-color="#fd0d0d"/><stop offset="0.13" stop-color="#f90d0d"/><stop offset="0.16" stop-color="#f40c0c"/><stop offset="0.19" stop-color="#f00c0c"/><stop offset="0.22" stop-color="#e90c0c"/><stop offset="0.25" stop-color="#e10b0b"/><stop offset="0.29" stop-color="#d80b0b"/><stop offset="0.32" stop-color="#cd0a0a"/><stop offset="0.35" stop-color="#c00a0a"/><stop offset="0.38" stop-color="#b10909"/><stop offset="0.41" stop-color="#a00808"/><stop offset="0.45" stop-color="#8c0707"/><stop offset="0.48" stop-color="#740606"/></radialGradient><linearGradient id="g50" gradientUnits="userSpaceOnUse" x1="210.86" y1="387.6" x2="182.34" y2="391.6"><stop offset="0" stop-color="#525252"/><stop offset="0.08" stop-color="#646464"/><stop offset="0.17" stop-color="#727272"/><stop offset="0.25" stop-color="#7c7c7c"/><stop offset="0.33" stop-color="#838383"/><stop offset="0.42" stop-color="#898989"/><stop offset="0.5" stop-color="#8e8e8e"/><stop offset="0.58" stop-color="#909090"/><stop offset="0.67" stop-color="#909090"/><stop offset="0.75" stop-color="#909090"/><stop offset="0.83" stop-color="#8d8d8d"/><stop offset="0.92" stop-color="#878787"/><stop offset="1" stop-color="#7b7b7b"/></linearGradient><linearGradient id="g42" gradientUnits="userSpaceOnUse" x1="184.13" y1="396.39" x2="209.07" y2="382.81"><stop offset="0" stop-color="#5b5b5b"/><stop offset="0.08" stop-color="#606060"/><stop offset="0.17" stop-color="#636363"/><stop offset="0.25" stop-color="#646464"/><stop offset="0.33" stop-color="#646464"/><stop offset="0.42" stop-color="#646464"/><stop offset="0.5" stop-color="#626262"/><stop offset="0.58" stop-color="#606060"/><stop offset="0.67" stop-color="#5e5e5e"/><stop offset="0.75" stop-color="#5a5a5a"/><stop offset="0.83" stop-color="#565656"/><stop offset="0.92" stop-color="#505050"/><stop offset="1" stop-color="#484848"/></linearGradient><linearGradient id="g52" gradientUnits="userSpaceOnUse" x1="217.31" y1="433.6" x2="188.79" y2="437.6"><stop offset="0" stop-color="#919191"/><stop offset="0.08" stop-color="#b2b2b2"/><stop offset="0.17" stop-color="#c9c9c9"/><stop offset="0.25" stop-color="#dbdbdb"/><stop offset="0.33" stop-color="#e9e9e9"/><stop offset="0.42" stop-color="#f3f3f3"/><stop offset="0.5" stop-color="#fbfbfb"/><stop offset="0.58" stop-color="#ffffff"/><stop offset="0.67" stop-color="#ffffff"/><stop offset="0.75" stop-color="#ffffff"/><stop offset="0.83" stop-color="#fafafa"/><stop offset="0.92" stop-color="#efefef"/><stop offset="1" stop-color="#dbdbdb"/></linearGradient><linearGradient id="g44" gradientUnits="userSpaceOnUse" x1="163.91" y1="359.25" x2="188.86" y2="345.67"><stop offset="0" stop-color="#a1a1a1"/><stop offset="0.08" stop-color="#aaaaaa"/><stop offset="0.17" stop-color="#afafaf"/><stop offset="0.25" stop-color="#b1b1b1"/><stop offset="0.33" stop-color="#b2b2b2"/><stop offset="0.42" stop-color="#b1b1b1"/><stop offset="0.5" stop-color="#aeaeae"/><stop offset="0.58" stop-color="#ababab"/><stop offset="0.67" stop-color="#a6a6a6"/><stop offset="0.75" stop-color="#a0a0a0"/><stop offset="0.83" stop-color="#989898"/><stop offset="0.92" stop-color="#8d8d8d"/><stop offset="1" stop-color="#7f7f7f"/></linearGradient><radialGradient id="g5" gradientUnits="userSpaceOnUse" cx="209.5" cy="481.6" r="68.32" fx="198.28" fy="470.38"><stop offset="0" stop-color="#ffffff"/><stop offset="0.03" stop-color="#ffffff"/><stop offset="0.06" stop-color="#ffffff"/><stop offset="0.1" stop-color="#fdfdfd"/><stop offset="0.13" stop-color="#f9f9f9"/><stop offset="0.16" stop-color="#f4f4f4"/><stop offset="0.19" stop-color="#f0f0f0"/><stop offset="0.22" stop-color="#e9e9e9"/><stop offset="0.25" stop-color="#e1e1e1"/><stop offset="0.29" stop-color="#d8d8d8"/><stop offset="0.32" stop-color="#cdcdcd"/><stop offset="0.35" stop-color="#c0c0c0"/><stop offset="0.38" stop-color="#b1b1b1"/><stop offset="0.41" stop-color="#a0a0a0"/><stop offset="0.45" stop-color="#8c8c8c"/><stop offset="0.48" stop-color="#747474"/></radialGradient><radialGradient id="g3" gradientUnits="userSpaceOnUse" cx="155.35" cy="313.8" r="67.48" fx="144.26" fy="302.71"><stop offset="0" stop-color="#ffffff"/><stop offset="0.03" stop-color="#ffffff"/><stop offset="0.06" stop-color="#ffffff"/><stop offset="0.1" stop-color="#fdfdfd"/><stop offset="0.13" stop-color="#f9f9f9"/><stop offset="0.16" stop-color="#f4f4f4"/><stop offset="0.19" stop-color="#f0f0f0"/><stop offset="0.22" stop-color="#e9e9e9"/><stop offset="0.25" stop-color="#e1e1e1"/><stop offset="0.29" stop-color="#d8d8d8"/><stop offset="0.32" stop-color="#cdcdcd"/><stop offset="0.35" stop-color="#c0c0c0"/><stop offset="0.38" stop-color="#b1b1b1"/><stop offset="0.41" stop-color="#a0a0a0"/><stop offset="0.45" stop-color="#8c8c8c"/><stop offset="0.48" stop-color="#747474"/></radialGradient></defs><path d="M321.38 222.38 316.12 223.62 310.88 225.88 305.38 229.62 301.62 233.38 298.12 238.38 296.12 242.62 294.62 247.62 293.62 253.62 294.12 255.12 296.62 258.12 309.62 268.12 315.88 274.38 317.38 276.38 319.12 280.38 318.88 286.62 319.38 286.62 319.62 285.88 322.62 286.38 330.88 286.12 330.88 286.88 331.62 286.88 331.88 280.62 332.88 278.38 335.12 275.38 341.88 269.38 352.88 261.88 357.12 257.88 358.12 256.12 358.62 254.12 358.12 249.62 356.38 242.88 353.38 236.88 350.12 232.62 345.12 228.12 338.88 224.62 333.62 222.88 328.88 222.12Z" fill="url(#g0)"/><circle cx="320.06" cy="248.16" r="3.55" fill="url(#spec)"/><path d="M542.12 351.12 537.38 351.88 532.62 353.38 528.12 355.62 523.62 358.88 520.12 362.38 516.88 366.88 514.38 372.12 513.12 376.38 512.62 380.62 511.88 381.38 513.38 381.38 515.88 380.38 518.12 381.12 521.38 384.38 522.88 386.62 524.88 390.88 526.38 396.12 526.62 400.62 525.62 403.38 524.12 404.88 521.62 405.62 521.38 406.62 521.88 406.38 525.88 409.88 532.62 413.62 540.12 415.62 547.62 415.88 554.12 414.62 558.12 413.12 561.62 411.12 562.62 411.38 562.62 410.38 562.12 409.88 562.88 407.88 568.38 398.62 571.38 394.62 576.12 389.88 577.38 389.88 576.62 389.38 577.12 386.62 577.12 380.38 576.12 374.88 573.12 367.62 569.88 362.88 565.38 358.38 560.62 355.12 554.12 352.38 547.62 351.12Z" fill="url(#g8)"/><circle cx="538.62" cy="377.32" r="3.58" fill="url(#spec)"/><path d="M576.38 389.12 575.38 389.38 572.38 392.12 567.88 397.88 563.62 404.62 561.88 408.38 561.38 410.38 563.38 412.12 575.12 420.12 575.88 417.12 581.12 408.12 585.12 402.88 588.88 399.12 589.88 398.62 589.62 398.12Z" fill="url(#g38)"/><path d="M294.12 251.38 293.62 253.12 291.88 300.62 292.62 300.62 293.12 299.38 294.88 297.62 297.62 296.12 301.12 295.12 306.12 294.88 310.12 295.62 313.88 297.12 315.38 298.12 317.38 300.12 318.12 301.88 318.62 301.88 319.62 282.62 319.38 278.62 317.88 275.62 312.88 269.88 307.62 265.38 299.12 259.12 295.88 256.12 294.62 254.38Z" fill="url(#g20)"/><path d="M358.12 252.38 357.88 254.62 357.12 256.38 353.38 260.38 338.62 270.88 334.62 274.62 332.38 277.62 331.12 280.88 330.38 302.38 331.12 302.38 331.62 301.12 333.62 299.12 336.38 297.62 340.12 296.62 343.62 296.38 348.38 297.12 353.12 299.12 355.88 301.62 356.62 303.88 357.38 303.88 359.12 261.62 359.12 254.12Z" fill="url(#g24)"/><path d="M588.88 398.12 584.62 402.12 579.12 409.62 575.38 416.38 574.62 419.62 595.62 433.88 596.38 434.62 596.38 435.12 596.88 435.12 597.38 432.38 600.88 425.88 606.62 417.88 609.38 414.88 611.62 413.38 611.62 412.62 610.62 412.62 589.62 398.12Z" fill="url(#g40)"/><path d="M518.88 380.62 515.88 379.62 484.88 391.12 487.88 392.12 490.38 394.38 493.12 398.38 494.62 401.62 496.12 406.62 496.38 412.12 495.38 414.62 494.12 415.62 494.12 416.62 524.88 405.38 526.12 404.12 527.12 401.38 527.12 396.88 526.38 393.12 523.38 385.88 520.88 382.38Z" fill="url(#g36)"/><path d="M618.62 411.12 614.62 411.62 610.62 412.88 608.62 414.38 606.12 417.12 600.38 425.12 596.88 431.62 596.38 433.12 596.38 437.12 597.12 440.88 599.38 446.12 601.88 449.62 604.12 451.88 607.12 454.12 611.12 456.12 615.62 457.38 621.12 457.62 625.62 456.88 629.62 455.38 633.62 452.88 637.12 449.62 639.62 446.12 641.88 440.88 642.62 437.12 642.62 431.62 641.62 427.12 639.88 423.12 637.88 420.12 635.12 417.12 631.38 414.38 628.38 412.88 624.38 411.62Z" fill="url(#g9)"/><circle cx="615.07" cy="429.97" r="3" fill="url(#spec)"/><path d="M130.38 383.12 126.12 383.88 121.12 385.88 117.12 388.62 114.38 391.38 112.12 394.62 109.88 399.88 109.12 403.62 109.12 409.12 109.88 412.62 111.62 417.12 114.12 420.88 117.62 424.38 121.38 426.88 125.88 428.62 129.38 429.38 134.88 429.38 140.12 428.12 145.12 425.62 149.88 421.38 151.88 418.62 153.12 416.12 154.12 415.12 152.38 415.12 146.38 416.88 144.62 416.88 140.88 415.38 136.62 411.12 134.62 407.38 133.62 403.88 133.38 400.62 134.38 396.12 136.12 393.12 138.12 391.12 140.62 389.88 146.62 388.38 146.62 387.62 146.12 387.88 144.12 386.38 139.12 384.12 133.88 383.12Z" fill="url(#g4)"/><circle cx="127.78" cy="401.88" r="3" fill="url(#spec)"/><path d="M316.12 297.62 313.12 295.88 309.88 294.88 306.88 294.38 302.12 294.38 296.88 295.62 294.12 297.12 292.62 298.62 291.88 300.12 291.62 301.88 290.88 326.12 290.38 330.38 291.38 330.38 293.88 326.12 296.38 323.12 300.38 319.38 303.88 316.88 311.12 313.38 315.62 312.12 319.12 311.62 319.12 311.12 318.38 310.88 318.62 300.88 317.88 299.38Z" fill="url(#g18)"/><path d="M333.62 298.12 331.12 300.38 330.38 301.88 330.12 311.12 329.12 311.62 329.12 312.12 335.62 314.12 340.12 316.38 344.12 319.12 350.12 325.12 353.38 329.88 355.38 334.38 356.12 334.38 357.38 304.38 357.12 302.38 356.38 300.88 353.88 298.62 351.38 297.38 346.88 296.12 339.38 296.12 335.62 297.12Z" fill="url(#g22)"/><path d="M487.12 390.88 485.12 390.88 466.38 397.88 465.62 397.88 465.12 397.12 465.12 398.62 466.62 400.12 469.62 404.38 472.12 409.38 474.12 416.12 474.62 419.62 474.62 424.12 475.12 424.12 475.12 423.62 475.88 423.12 494.12 416.62 495.88 415.38 496.62 413.88 497.12 410.88 496.88 407.38 495.12 400.88 491.88 394.88 489.62 392.38Z" fill="url(#g34)"/><path d="M160.12 384.12 139.12 389.62 137.38 390.62 134.62 393.88 133.38 396.88 132.88 399.88 133.12 404.62 134.12 408.12 135.62 411.12 136.88 412.88 140.12 415.88 143.88 417.38 147.12 417.38 167.12 412.12 167.12 411.62 165.38 411.62 162.88 410.88 160.12 409.12 158.12 407.12 156.38 404.62 154.62 400.62 153.88 396.62 154.38 392.38 156.38 388.12 158.62 385.88 160.12 385.12Z" fill="url(#g48)"/><path d="M320.12 310.88 314.88 311.62 307.88 313.88 303.12 316.38 297.88 320.38 293.38 325.38 289.88 331.12 287.38 337.88 286.38 344.62 285.62 345.38 287.38 345.38 288.38 344.88 289.38 344.88 292.38 347.62 293.88 349.88 296.62 355.88 298.12 361.62 298.38 366.12 297.62 368.38 296.62 369.38 294.62 369.88 294.62 370.62 295.12 370.62 297.88 373.62 301.62 376.62 307.88 380.12 311.88 381.62 316.12 382.62 320.12 383.12 324.62 383.12 332.88 381.62 336.38 380.38 340.88 378.12 342.88 376.62 343.88 377.12 345.62 373.62 355.62 358.12 358.62 354.38 357.88 353.62 358.38 350.88 358.38 343.12 357.12 336.88 353.88 329.12 349.38 322.88 344.88 318.62 340.88 315.88 336.38 313.62 332.88 312.38 327.12 311.12Z" fill="url(#g1)"/><circle cx="315.52" cy="340.12" r="3.98" fill="url(#spec)"/><path d="M357.88 353.88 350.62 364.12 343.12 376.62 373.62 396.38 374.12 396.38 378.88 388.12 388.62 373.62Z" fill="url(#g14)"/><path d="M387.88 373.38 378.38 387.38 373.38 396.12 402.62 414.88 403.38 415.62 403.38 416.12 404.12 416.12 406.12 412.12 409.88 406.12 418.38 393.88 418.62 392.38 418.12 392.62 388.88 373.62Z" fill="url(#g16)"/><path d="M433.88 386.38 429.12 387.38 424.88 388.88 418.12 392.62 409.38 405.38 403.62 414.88 402.88 418.88 403.12 427.62 404.88 435.12 405.62 435.12 405.62 433.12 406.12 432.62 409.62 434.12 419.88 440.38 428.12 447.12 430.12 449.38 432.12 452.88 432.12 458.62 432.62 458.88 432.62 458.12 433.12 457.88 435.12 458.38 444.38 458.12 444.62 458.88 445.12 458.88 445.12 453.62 445.62 452.12 448.12 448.62 452.12 444.88 461.12 438.62 469.88 433.88 471.88 433.38 472.12 435.88 472.62 435.88 474.38 430.38 475.12 425.62 474.88 416.88 472.62 408.62 470.12 403.62 465.38 397.38 459.88 392.62 453.12 388.88 446.88 386.88 441.88 386.12Z" fill="url(#g6)"/><circle cx="432.1" cy="415.4" r="3.99" fill="url(#spec)"/><path d="M290.88 344.88 289.62 344.12 288.38 344.12 255.12 355.38 255.12 355.88 256.62 356.38 259.38 359.12 262.88 365.62 265.12 374.12 265.12 377.62 263.88 380.12 263.88 381.12 297.38 369.88 298.12 369.12 298.88 366.88 298.88 362.38 297.62 356.62 294.38 349.12 292.88 346.88Z" fill="url(#g12)"/><path d="M472.38 432.62 471.12 432.62 469.12 433.38 458.38 439.38 451.38 444.38 446.38 449.38 444.62 452.88 444.38 470.38 445.12 470.38 445.38 469.12 448.38 466.38 452.12 464.88 456.38 464.12 461.88 464.38 465.88 465.38 469.62 467.38 471.12 468.88 471.62 470.12 472.38 470.12 472.88 434.62Z" fill="url(#g26)"/><path d="M405.62 431.88 405.12 432.38 404.88 434.62 404.62 469.62 405.38 469.62 405.62 468.62 407.62 466.62 410.38 465.12 413.88 464.12 418.62 463.62 424.12 464.38 427.12 465.38 429.38 466.62 431.62 468.88 431.88 469.88 432.62 469.88 432.88 453.38 432.62 452.12 430.62 448.62 425.88 443.88 420.62 439.88 410.38 433.62 407.12 432.12Z" fill="url(#g30)"/><path d="M160.88 383.38 160.62 384.12 157.88 385.38 155.88 387.38 154.38 390.12 153.38 394.38 153.38 397.38 154.12 401.38 155.88 405.38 159.38 409.62 161.62 411.12 163.62 411.88 167.88 411.88 168.38 412.38 168.38 411.12 165.62 407.12 163.62 403.12 162.12 398.88 160.88 392.38Z" fill="url(#g46)"/><path d="M257.38 355.88 256.38 355.38 255.12 355.38 224.62 365.88 223.62 365.38 223.62 366.62 227.88 372.62 230.62 378.88 232.12 385.38 232.38 392.38 232.88 392.38 233.38 391.38 264.12 381.12 264.88 380.38 265.62 378.38 265.62 373.38 264.62 368.62 261.62 361.12 259.88 358.38Z" fill="url(#g10)"/><path d="M448.62 465.38 446.88 466.38 444.88 468.38 444.38 469.88 444.38 488.62 443.62 488.88 443.62 489.38 449.62 491.12 454.12 493.38 457.62 495.88 462.38 500.62 465.62 505.38 468.12 510.88 469.12 514.62 469.38 518.62 470.38 519.38 471.12 521.12 471.88 521.12 472.38 469.62 471.62 468.12 468.88 465.88 465.88 464.62 462.62 463.88 455.62 463.62 452.38 464.12Z" fill="url(#g28)"/><path d="M427.88 464.88 422.12 463.38 414.62 463.38 411.12 464.12 407.62 465.62 404.88 468.38 404.38 483.88 404.12 520.38 404.88 520.38 405.38 519.12 406.62 517.88 407.12 513.62 408.88 508.38 411.12 504.12 413.88 500.38 418.38 495.88 422.38 493.12 426.38 491.12 430.12 489.88 433.12 489.38 433.12 488.62 432.38 488.62 432.62 469.38 432.12 468.12 430.12 466.12Z" fill="url(#g32)"/><path d="M206.62 354.62 200.12 353.38 193.12 353.38 192.38 352.62 192.38 354.12 195.88 360.38 196.12 362.62 193.88 367.12 190.38 370.62 187.88 372.38 183.62 374.38 179.62 375.38 177.38 375.38 174.62 374.62 173.12 373.62 171.88 372.12 168.88 366.38 167.88 366.38 168.12 367.12 165.12 371.38 163.12 375.38 161.62 379.62 160.38 386.12 160.38 393.12 161.62 399.62 163.12 403.88 165.12 407.88 168.62 412.88 173.38 417.62 178.88 421.38 184.38 423.88 186.62 424.38 187.12 425.38 187.62 425.38 187.12 419.88 189.38 416.88 191.12 415.62 194.88 413.88 201.62 412.38 207.62 412.62 212.12 414.38 214.12 416.62 214.88 421.38 215.38 421.38 215.38 420.88 220.12 417.38 226.12 410.88 229.62 404.88 231.62 399.38 232.88 392.38 232.88 386.62 231.12 378.12 228.38 371.88 224.62 366.38 218.62 360.62 214.88 358.12 210.88 356.12Z" fill="url(#g2)"/><circle cx="189.68" cy="382.68" r="4" fill="url(#spec)"/><path d="M434.62 488.38 429.38 489.38 425.62 490.62 421.62 492.62 417.62 495.38 413.38 499.62 409.88 504.62 407.88 508.88 406.62 512.88 406.12 517.12 404.62 518.88 404.62 522.62 405.38 523.62 406.12 528.62 407.62 533.38 409.88 537.88 413.12 542.38 416.62 545.88 421.12 549.12 425.62 551.38 429.38 552.62 434.62 553.62 441.38 553.62 446.62 552.62 450.38 551.38 454.88 549.12 459.38 545.88 462.88 542.38 466.12 537.88 468.38 533.38 469.88 528.62 470.38 524.62 471.38 523.12 471.38 519.38 469.88 517.88 469.88 515.62 468.88 510.88 466.12 504.62 462.88 499.88 458.38 495.38 454.88 492.88 450.38 490.62 446.62 489.38 441.38 488.38Z" fill="url(#g7)"/><circle cx="431.77" cy="514.77" r="3.61" fill="url(#spec)"/><path d="M470.38 518.12 470.88 519.62 470.88 523.88 471.88 522.12 471.88 520.62Z" fill="#840707"/><path d="M405.88 517.38 404.12 519.88 404.12 521.38 405.12 523.38 405.12 519.12Z" fill="#840707"/><path d="M214.38 415.38 212.88 413.88 209.38 412.38 206.62 411.88 200.88 411.88 194.12 413.38 190.38 415.12 188.62 416.38 186.62 419.12 186.62 422.12 188.88 437.12 189.38 437.12 190.38 435.12 193.62 432.38 196.88 430.88 202.62 429.38 207.38 429.12 210.62 429.62 214.38 431.12 216.38 433.12 216.38 433.62 217.12 433.62 215.12 418.12Z" fill="url(#g50)"/><path d="M188.88 345.88 188.88 348.62 187.38 352.38 183.38 356.88 180.12 359.12 174.62 361.38 169.88 361.88 167.88 361.38 165.12 359.62 164.88 358.88 163.88 358.88 171.38 372.88 172.38 374.12 173.88 375.12 176.62 375.88 180.38 375.88 185.62 374.38 191.12 371.12 194.38 367.88 195.38 366.38 196.62 363.38 196.62 360.38Z" fill="url(#g42)"/><path d="M215.12 430.62 210.12 428.88 201.88 428.88 194.88 430.88 192.12 432.38 189.88 434.38 188.88 436.38 188.88 438.12 192.62 464.12 192.12 464.62 193.38 464.62 196.62 461.88 200.38 459.88 207.38 458.12 214.38 458.38 217.62 459.38 219.88 460.62 221.62 460.62 220.88 460.12 217.38 434.12 216.88 432.38Z" fill="url(#g52)"/><path d="M177.12 323.62 176.38 323.62 173.62 328.12 169.62 332.12 167.12 333.88 160.62 336.62 155.62 337.38 151.62 337.12 152.62 338.12 163.88 359.12 165.38 360.88 167.88 362.12 174.38 362.12 178.38 360.88 180.88 359.62 184.12 357.38 186.62 354.88 187.88 353.12 189.38 349.38 189.12 346.38 177.12 324.38Z" fill="url(#g44)"/><path d="M206.62 457.62 202.62 458.38 196.62 460.88 193.88 462.88 189.88 467.12 188.12 469.88 186.12 474.62 185.12 480.62 185.38 485.12 186.38 489.38 188.88 494.62 191.12 497.62 194.88 501.12 200.12 504.12 203.12 505.12 207.12 505.88 211.88 505.88 215.88 505.12 221.88 502.62 225.38 500.12 228.88 496.38 231.62 491.88 233.12 487.62 233.88 482.62 233.62 478.12 232.88 474.62 230.88 469.88 228.12 465.88 225.12 462.88 222.38 460.88 216.12 458.12 213.62 457.62Z" fill="url(#g5)"/><circle cx="204.86" cy="476.96" r="3" fill="url(#spec)"/><path d="M150.88 290.12 146.62 291.38 142.62 293.38 140.12 295.12 135.88 299.62 133.62 303.38 131.88 308.38 131.38 311.38 131.62 317.88 132.88 322.38 134.38 325.62 137.62 330.12 140.62 332.88 144.62 335.38 149.38 337.12 154.38 337.88 158.88 337.62 164.38 336.12 167.88 334.38 170.38 332.62 174.88 327.88 177.12 324.12 178.88 318.88 179.38 315.62 179.12 309.88 177.62 304.62 176.12 301.62 173.62 298.12 168.88 293.88 165.88 292.12 160.88 290.38 158.12 289.88Z" fill="url(#g3)"/><circle cx="150.77" cy="309.22" r="3" fill="url(#spec)"/></svg>
</body></html>
